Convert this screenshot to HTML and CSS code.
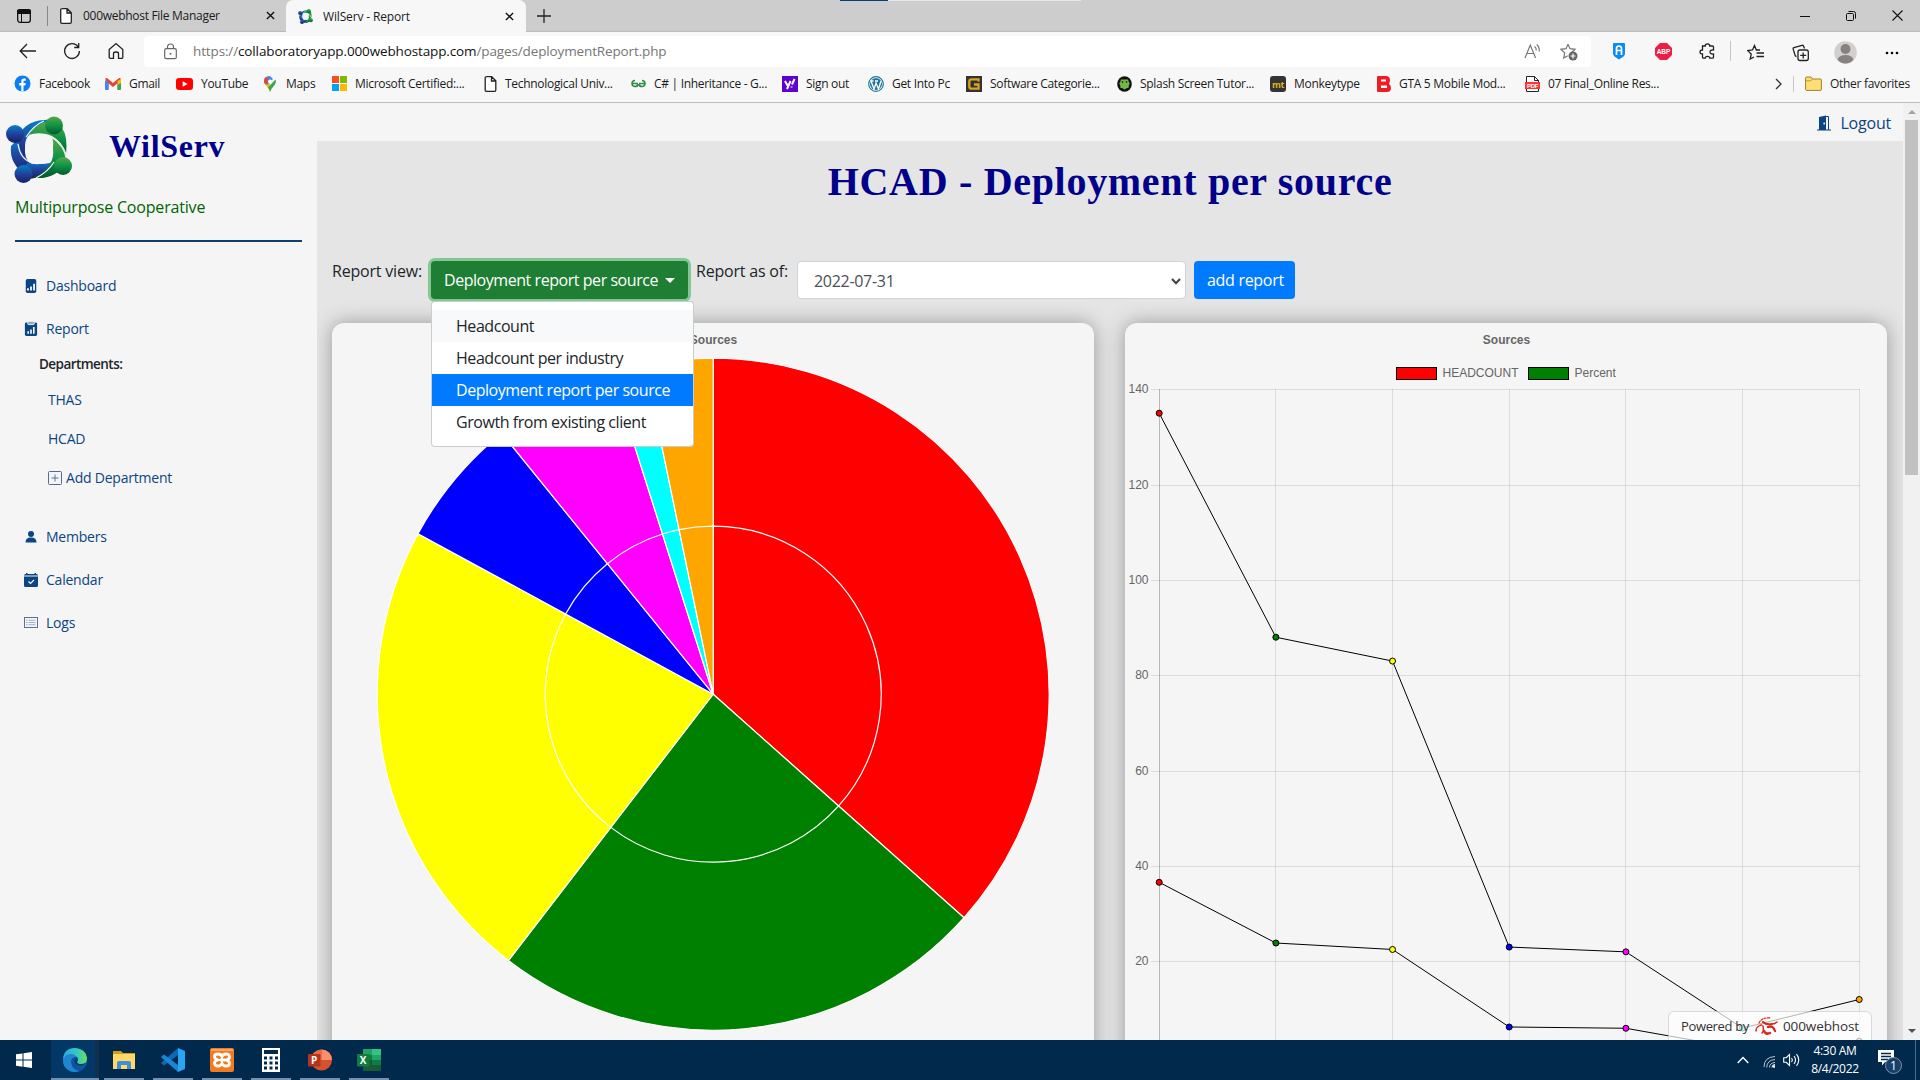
FILE: index.html
```html
<!DOCTYPE html>
<html lang="en">
<head>
<meta charset="utf-8">
<title>WilServ - Report</title>
<link rel="stylesheet" href="styles.css">
</head>
<body>
<svg width="0" height="0" class="defs">
  <defs>
    <linearGradient id="gBlue" x1="0" y1="0" x2="0" y2="1"><stop offset="0" stop-color="#0680cc"/><stop offset=".5" stop-color="#20419a"/><stop offset="1" stop-color="#1a1f66"/></linearGradient>
    <linearGradient id="gGreen" x1="0" y1="0" x2="0" y2="1"><stop offset="0" stop-color="#57a844"/><stop offset=".5" stop-color="#0e9347"/><stop offset="1" stop-color="#04592a"/></linearGradient>
    <linearGradient id="gEdge" x1="0" y1="0" x2="1" y2="0"><stop offset="0" stop-color="#29a9e1"/><stop offset=".6" stop-color="#35c9c0"/><stop offset="1" stop-color="#6be35a"/></linearGradient>
    <symbol id="page" viewBox="0 0 12 16"><path d="M1.7.7h5.5l4.1 4.1v9.3q0 1.2-1.2 1.2H1.9Q.7 15.300.7 14.100V1.900Q.7.700 1.900.700zM7 .8V5h4.200" fill="#fff" stroke="#222" stroke-width="1.300"/></symbol>
    <symbol id="x" viewBox="0 0 10 10"><path d="M1 1l8 8M9 1L1 9" stroke="#111" stroke-width="1.500"/></symbol>
    <symbol id="logo" viewBox="0 0 66 67">
      <path d="M9 26Q17 5 38 4Q47 3 49 7Q28 9 23 19Q15 34 24 48Q5 42 9 26z" fill="url(#gBlue)"/>
      <path d="M5 30Q3 48 20 59L26 48Q14 40 12 23z" fill="url(#gBlue)"/>
      <path d="M21 47Q34 50 50 45Q40 62 22 63L17 55z" fill="url(#gBlue)"/>
      <path d="M22 19Q33 4 47 6L56 12Q62 20 60 39Q52 20 40 18Q31 16 22 19z" fill="url(#gGreen)"/>
      <path d="M46 22Q58 30 60 44Q55 59 37 62L27 62Q43 55 45 45Q47 36 46 22z" fill="url(#gGreen)"/>
      <path d="M22 20Q31 18 44 20Q48 21 47 31Q48 43 44 47Q32 49 24 47Q18 42 19 31Q19 24 22 20z" fill="#f5f5f5"/>
      <path d="M20 21Q28 9 38 5M12 28Q14 43 26 47M30 62Q42 56 48 46M46 21Q55 25 60 38" fill="none" stroke="#f5f5f5" stroke-width="1.200"/>
      <circle cx="9" cy="18" r="9" fill="url(#gBlue)"/><circle cx="17.500" cy="58" r="9" fill="url(#gBlue)"/>
      <circle cx="48" cy="9.500" r="9" fill="url(#gGreen)"/><circle cx="57" cy="50" r="9" fill="url(#gGreen)"/>
    </symbol>
  </defs>
</svg>

<header class="browser">
  <div class="tabstrip">
    <span class="progress"></span>
    <div class="tab-actions"><svg width="16" height="16" viewBox="0 0 16 16"><rect x="1.700" y="1.700" width="12.600" height="12.600" rx="2.200" fill="none" stroke="#111" stroke-width="1.300"/><path d="M1.500 2h13v3.500H1.500zM5.500 5v9" stroke="#111" fill="#111"/></svg></div>
    <div class="tab tab-idle">
      <svg width="12" height="16"><use href="#page"/></svg>
      <span class="tab-title t-files">000webhost File Manager</span>
      <svg width="9" height="9"><use href="#x"/></svg>
    </div>
    <div class="tab tab-active">
      <svg width="15" height="15"><use href="#logo"/></svg>
      <span class="tab-title t-report">WilServ - Report</span>
      <svg width="9" height="9"><use href="#x"/></svg>
    </div>
    <svg class="newtab" width="14" height="14" viewBox="0 0 14 14"><path d="M7 0v14M0 7h14" stroke="#222" stroke-width="1.300"/></svg>
    <div class="window-controls">
      <svg width="10" height="10"><path d="M0 5.500h10" stroke="#111"/></svg>
      <svg width="10" height="10" viewBox="0 0 10 10"><rect x=".5" y="2.500" width="7" height="7" rx="1" fill="none" stroke="#111"/><path d="M2.500 1q0-.5.500-.5h4.500q2 0 2 2V7q0 .5-.5.500" fill="none" stroke="#111"/></svg>
      <svg width="11" height="11" viewBox="0 0 11 11"><path d="M.5.500l10 10M10.500.500l-10 10" stroke="#111" stroke-width="1.100"/></svg>
    </div>
  </div>

  <div class="toolbar">
    <div class="nav-buttons">
      <svg width="18" height="16" viewBox="0 0 18 16"><path d="M17 8H1.500M8 1L1.200 8L8 15" fill="none" stroke="#222" stroke-width="1.300"/></svg>
      <svg width="18" height="18" viewBox="0 0 18 18"><path d="M15.200 5A7.400 7.400 0 1 0 16.400 9M15.700 1v4.500h-4.500" fill="none" stroke="#222" stroke-width="1.300"/></svg>
      <svg width="16" height="18" viewBox="0 0 16 18"><path d="M1.200 7.500L8 1.500l6.800 6v7.700q0 1.200-1.200 1.200H10.500V11.500Q10.500 10 8 10t-2.500 1.500v4.900H2.400q-1.200 0-1.200-1.200z" fill="none" stroke="#222" stroke-width="1.300"/></svg>
    </div>
    <div class="address">
      <svg width="13" height="17" viewBox="0 0 13 17"><rect x=".7" y="5.700" width="11.600" height="10" rx="1.500" fill="none" stroke="#666" stroke-width="1.200"/><path d="M3.500 5.500V4a3 3 0 0 1 6 0v1.500" fill="none" stroke="#666" stroke-width="1.200"/><circle cx="6.500" cy="10.700" r="1" fill="#666"/></svg>
      <span class="url">https://<b>collaboratoryapp.000webhostapp.com</b>/pages/deploymentReport.php</span>
      <svg width="17" height="17" viewBox="0 0 17 17"><path d="M1 15L6.300 2 11.600 15M3 10.500h6.700M10.500 3.500q2 1.500 1.800 4M12.700 1.500q3 2.500 2.500 7" fill="none" stroke="#777" stroke-width="1.200"/></svg>
      <svg width="18" height="18" viewBox="0 0 18 18"><path d="M8 1.200l2 4.500 5 .6-3.500 3.200M8 1.200L6 5.700l-5 .6L4.700 10l-1 5 4-2.300" fill="none" stroke="#777" stroke-width="1.200"/><circle cx="13" cy="13" r="4.500" fill="#666"/><path d="M13 10.500v5M10.500 13h5" stroke="#fff" stroke-width="1.200"/></svg>
    </div>
    <div class="ext">
      <svg width="14" height="18" viewBox="0 0 14 18"><path d="M2 1h10q1 0 1 1v10q0 2-6 5.500Q1 14 1 12V2q0-1 1-1z" fill="#0a8cf5"/><path d="M4.500 13V6.500Q4.500 4 7 4t2.500 2.500V13M4.500 8.500h5" fill="none" stroke="#fff" stroke-width="1.700"/></svg>
      <svg width="17" height="17" viewBox="0 0 17 17"><path d="M5 0h7l5 5v7l-5 5H5l-5-5V5z" fill="#ec1e45"/><text x="8.500" y="11.300" class="abp">ABP</text></svg>
      <svg width="17" height="17" viewBox="0 0 17 17"><path d="M3.500 3h2.700q0-2.200 2.300-2.200T10.800 3h2.700q1 0 1 1v3q-3.500-.3-3.500 2t3.500 2v3q0 1.200-1 1.200h-2.700Q10.800 13.300 8.500 13.300t-2.300 1.900H4.500q-1 0-1-1.200V11Q1 11 1 9t2.500-2z" fill="none" stroke="#222" stroke-width="1.300"/></svg>
    </div>
    <div class="ext ext-right">
      <svg width="18" height="17" viewBox="0 0 18 17"><path d="M13 6H9.300L7.500 1.500 5.500 6l-4.800.6L4.200 10l-1 5 3.800-2M9.500 9H17M9.500 12.500H17" fill="none" stroke="#222" stroke-width="1.300"/></svg>
      <svg width="17" height="18" viewBox="0 0 17 18"><rect x="6" y="6" width="10.300" height="10.500" rx="2" fill="none" stroke="#222" stroke-width="1.300"/><path d="M11.200 8.500v6M8.200 11.400h6M12.500 4.500L11.500 2q-.4-1-1.500-.7L2 3.500q-1.200.4-.8 1.600L3 11q.5 1.500 1.500 1.500" fill="none" stroke="#222" stroke-width="1.300"/></svg>
      <svg width="23" height="23" viewBox="0 0 23 23"><circle cx="11.500" cy="11.500" r="11.300" fill="#d2d0ce"/><circle cx="11.500" cy="8" r="5" fill="#85827f"/><path d="M3.500 18.500Q5 14 11.500 14t8 4.500q-3 4-8 4t-8-4z" fill="#85827f"/></svg>
      <svg width="14" height="4"><circle cx="2" cy="2" r="1.300"/><circle cx="7" cy="2" r="1.300"/><circle cx="12" cy="2" r="1.300"/></svg>
    </div>
  </div>

  <nav class="bookmarks">
    <a><svg width="17" height="17" viewBox="0 0 17 17"><circle cx="8.500" cy="8.500" r="8" fill="#0d7ef0"/><path d="M7.300 16.500V10.500H5.200V8h2.100V6.300Q7.300 3.500 10 3.500h1.700v2.200h-1.200q-1 0-1 1V8h2.200l-.4 2.500H9.500v6z" fill="#fff"/></svg>Facebook</a>
    <a><svg width="16" height="12" viewBox="0 0 16 12"><path d="M2 11.500V2l6 5 6-5v9.500" fill="none" stroke="#ea4335" stroke-width="3"/><path d="M0 3h3.500v9H1q-1 0-1-1z" fill="#4285f4"/><path d="M12.500 3H16v8q0 1-1 1h-2.500z" fill="#34a853"/><path d="M12.500 3L16 1v4l-3.500 2z" fill="#fbbc04"/></svg>Gmail</a>
    <a><svg width="17" height="12" viewBox="0 0 17 12"><rect width="17" height="12" rx="3" fill="#f00"/><path d="M6.700 3.300l5 2.700-5 2.700z" fill="#fff"/></svg>YouTube</a>
    <a class="maps"><svg width="12" height="16" viewBox="0 0 12 16"><path d="M6 16Q5 12.500 2 9.500 0 7.500 0 5.500 0 2.500 2 1l4 5z" fill="#fbbc04"/><path d="M2 1Q3.500 0 6 0l3 3-6 6Q0 7.500 0 5.500T2 1z" fill="#4285f4"/><path d="M0 5Q0 2 2 1l3 3-3 4Q0 7 0 5z" fill="#ea4335"/><path d="M11.500 3.500Q13 7 9 11q-2 2-3 5-.5-2.500-2-4.500z" fill="#34a853"/><circle cx="6" cy="5.500" r="2" fill="#fff"/></svg>Maps</a>
    <a><svg width="15" height="15"><path d="M0 0h7v7H0z" fill="#f4511e"/><path d="M8 0h7v7H8z" fill="#7fba00"/><path d="M0 8h7v7H0z" fill="#00a4ef"/><path d="M8 8h7v7H8z" fill="#ffb900"/></svg>Microsoft Certified:...</a>
    <a><svg width="13" height="16"><use href="#page"/></svg>Technological Univ...</a>
    <a><svg width="15" height="9" viewBox="0 0 15 9"><path d="M7 4.500H1M7 5A3 3 0 1 1 4 1.500M8 4.500h6M8 5A3 3 0 1 0 11 1.500" fill="none" stroke="#2f8d46" stroke-width="1.700"/></svg>C# | Inheritance - G...</a>
    <a><svg width="16" height="16" viewBox="0 0 16 16"><path d="M0 0h16v16H0z" fill="#5f01d1"/><path d="M3 5l2.500 4.500M8.500 5L5 13M12.500 3L10 8.500M9.500 10.500v1" stroke="#fff" stroke-width="2"/></svg>Sign out</a>
    <a><svg width="16" height="16" viewBox="0 0 16 16"><circle cx="8" cy="8" r="7.300" fill="#fff" stroke="#21759b" stroke-width="1.200"/><circle cx="8" cy="8" r="6" fill="#21759b"/><path d="M3 5l3 8 2-6 2.500 6L13 5M2.500 5h3M7 5h3" fill="none" stroke="#fff" stroke-width="1.300"/></svg>Get Into Pc</a>
    <a><svg width="16" height="16" viewBox="0 0 16 16"><path d="M0 0h16v16H0z" fill="#333"/><path d="M12.500 5.500V3.300H5.500Q3.300 3.300 3.300 5.500v5q0 2.200 2.200 2.200h7V8.500H8" fill="none" stroke="#d9a520" stroke-width="2.300"/></svg>Software Categorie...</a>
    <a><svg width="15" height="16" viewBox="0 0 15 16"><ellipse cx="7.500" cy="8" rx="7.300" ry="7.800" fill="#111"/><path d="M4 3.500h7l1 3 1 1-1 1-.5 3.500H10l-2.500 1.500L5 12H3.500L3 8.500l-1-1 1-1z" fill="#72b844"/><circle cx="5.500" cy="6" r=".8"/><circle cx="9.500" cy="6" r=".8"/></svg>Splash Screen Tutor...</a>
    <a><svg width="16" height="16" viewBox="0 0 16 16"><rect width="16" height="16" rx="3" fill="#323437"/><text x="8" y="11.500" class="mt">mt</text></svg>Monkeytype</a>
    <a><svg width="14" height="16" viewBox="0 0 14 16"><path d="M1 0h9q3 1 3 4 0 2-1 4 2 1 2 4 0 4-4 4H1q-1 0-1-1V1q0-1 1-1z" fill="#f01c24"/><path d="M4 3.500h5v2H4zM4 9.500h6v2.500H4z" fill="#fff"/></svg>GTA 5 Mobile Mod...</a>
    <a><svg width="15" height="16" viewBox="0 0 15 16"><path d="M1.500.500h8l4 4v11h-12z" fill="#fff" stroke="#222"/><path d="M9.500.500v4h4" fill="none" stroke="#222"/><path d="M0 6h15v7H0z" fill="#f33"/><text x="7.500" y="11.700" class="pdf">PDF</text></svg>07 Final_Online Res...</a>
    <span class="more"><svg width="7" height="12" viewBox="0 0 7 12"><path d="M1 1l5 5-5 5" fill="none" stroke="#333" stroke-width="1.300"/></svg></span>
    <a class="other"><svg width="17" height="15" viewBox="0 0 17 15"><path d="M.6 2Q.6 1 1.600 1H6l1.500 2h7.900q1 0 1 1v9.200q0 1.200-1 1.200H1.700q-1.100 0-1.100-1.200z" fill="#ffdd78" stroke="#a5811f"/><path d="M.8 4.800h5L7.500 3" fill="none" stroke="#c89a27"/></svg>Other favorites</a>
  </nav>
</header>

<div class="page">
  <aside class="sidebar">
    <div class="brand"><svg width="66" height="67"><use href="#logo"/></svg><h2>WilServ</h2></div>
    <p class="tagline">Multipurpose Cooperative</p>
    <hr>
    <a class="item"><svg width="16" height="14" viewBox="0 0 16 16"><rect x="2" width="12" height="16" rx="2" fill="#0b4582"/><path d="M4.500 13v-2.500M8 13V8.500M11.500 13V5.500" stroke="#fff" stroke-width="2"/></svg>Dashboard</a>
    <a class="item"><svg width="16" height="15" viewBox="0 0 16 16"><rect x="1.500" y="1.500" width="13" height="14.500" rx="1.500" fill="#0b4582"/><rect x="4.500" y=".3" width="7" height="3.500" rx="1" fill="#8fa9c4" stroke="#f5f5f5"/><path d="M5 13.500V11M8 13.500V9M11 13.500V6.500" stroke="#fff" stroke-width="1.700"/></svg>Report</a>
    <div class="departments">
      <p>Departments:</p>
      <a>THAS</a>
      <a>HCAD</a>
      <a><svg width="14" height="14" viewBox="0 0 14 14"><rect x=".5" y=".5" width="13" height="13" rx="1" fill="none" stroke="#52699a"/><path d="M7 3.500v7M3.500 7h7" stroke="#52799a"/></svg>Add Department</a>
    </div>
    <a class="item"><svg width="16" height="12" viewBox="0 0 16 12"><circle cx="8" cy="3" r="3" fill="#0b4582"/><path d="M2.500 11.500Q2.500 6.500 8 6.500t5.500 5z" fill="#0b4582"/></svg>Members</a>
    <a class="item"><svg width="16" height="14" viewBox="0 0 16 14"><path d="M1 3.500h14V12.500q0 1.500-1.500 1.500h-11Q1 14 1 12.500zM1 2.500Q1 1 2.500 1H3V0h1.500v1h7V0H13v1h.5Q15 1 15 2.500z" fill="#0b4582"/><path d="M5.500 8.500l2 2 3.500-3.500" fill="none" stroke="#fff" stroke-width="1.200"/></svg>Calendar</a>
    <a class="item"><svg width="16" height="11" viewBox="0 0 16 11"><rect x="1.500" y=".5" width="13" height="10" fill="none" stroke="#5b6f9e"/><path d="M3 3.200h1.500M3 5.500h1.500M3 7.800h1.500M5.500 3.200h7M5.500 5.500h7M5.500 7.800h7" stroke="#9fb0c2" stroke-width="1.100"/></svg>Logs</a>
  </aside>

  <div class="body">
    <div class="topline"><svg width="14" height="16" viewBox="0 0 14 16"><path d="M2 15V2l7-1.500V15zM0 14.500h14v1H0z" fill="#0b4582"/><path d="M9 1.500h2.500V15" fill="none" stroke="#0b4582"/><circle cx="7.200" cy="8.500" r=".9" fill="#fff"/></svg><a>Logout</a></div>
    <main class="report">
      <h1>HCAD - Deployment per source</h1>
      <div class="filters">
        <label class="l-view">Report view:</label>
        <div class="dropdown">
          <button class="btn btn-success">Deployment report per source<i class="caret"></i></button>
          <ul class="menu">
            <li class="hover">Headcount</li>
            <li>Headcount per industry</li>
            <li class="active">Deployment report per source</li>
            <li>Growth from existing client</li>
          </ul>
        </div>
        <label class="l-asof">Report as of:</label>
        <div class="select">2022-07-31<svg width="10" height="7" viewBox="0 0 10 7"><path d="M1 1l4 4.200L9 1" fill="none" stroke="#444" stroke-width="2.200"/></svg></div>
        <button class="btn btn-primary">add report</button>
      </div>
      <div class="cards">
        <section class="card"><svg id="pie" width="762" height="760"><text x="381.500" y="20.500" class="chart-title">Sources</text></svg></section>
        <section class="card"><svg id="line" width="762" height="760"><text x="381.500" y="20.500" class="chart-title">Sources</text>
          <g stroke="#000"><rect x="271.500" y="44.500" width="40" height="12" fill="red"/><rect x="403.500" y="44.500" width="40" height="12" fill="green"/></g>
          <g class="tick"><text x="317.500" y="53.600">HEADCOUNT</text><text x="449.500" y="53.600">Percent</text></g>
        </svg></section>
      </div>
      <div class="powered"><span>Powered by</span>
        <svg width="24" height="20" viewBox="0 0 24 20"><g fill="none" stroke="#d8271c" stroke-linecap="round"><path d="M8 6q3 3 9 2" stroke-width="2.200"/><path d="M17 8q3 0 5-2" stroke-width="1.500"/><path d="M8 10q1 6-1 7" stroke-width="1.500"/><path d="M9 15q2 4 6 2" stroke-width="2.500"/><path d="M13 11q5-2 7 4" stroke-width="2.300"/><path d="M4 7Q7 1 15 2" stroke-width="1.200" stroke-dasharray="2 1.500"/><path d="M1 15q0-5 6-6" stroke-width="1.500" stroke-dasharray="2 1.500"/></g></svg>
        <b>000webhost</b></div>
    </main>
  </div>
  <div class="scrollbar"><i class="up"></i><i class="thumb"></i><i class="down"></i></div>
</div>

<footer class="taskbar">
  <div class="start"><svg width="16" height="16" viewBox="0 0 16 16"><path d="M0 2.300L6.500 1.400V7.500H0zM7.500 1.200L16 0v7.500H7.500zM0 8.500h6.500v6.200L0 13.800zM7.500 8.500H16V16l-8.500-1.200z" fill="#fff"/></svg></div>
  <div class="app current"><svg width="24" height="24" viewBox="0 0 24 24"><circle cx="12" cy="12" r="12" fill="#1470bd"/><path d="M0 11Q1 0 12 0q11 1 12 10 0 6-6 6-4 0-4-2 2-2 0-5Q8 3 0 11z" fill="url(#gEdge)"/><path d="M8 13q0-4 4-5 4 2 2 6-1 3 4 3.500 3 0 5-2Q20 24 12 24q-7-1-8-8z" fill="#0f549e"/><path d="M0 12Q2 6 8 6q4 0 5 3-5 0-5 5 1 8 8 9-4 2-9 0-7-3-7-11z" fill="#1f86d0"/><path d="M14.500 9.500Q15 12 14 14q0 2 4 2 3 0 5-1-3 3.500-7 2.500Q11 16 11.500 12q.5-2 3-2.500z" fill="#033866"/></svg></div>
  <div class="app"><svg width="22" height="18" viewBox="0 0 22 18"><path d="M0 0h8l2 2h12v5H0z" fill="#d99a1c"/><path d="M0 3h22v15H0z" fill="#ffd869"/><path d="M4 18v-6q0-2 2-2h10q2 0 2 2v6h-4v-4H8v4z" fill="#3f8fd6"/></svg></div>
  <div class="app"><svg width="24" height="24" viewBox="0 0 24 24"><path d="M17 0l7 3v18l-7 3z" fill="#2aa5f3"/><path d="M17 0v7L3 17.500 0 15z" fill="#0a6bb5"/><path d="M17 24v-7L3 6.500 0 9z" fill="#1789d4"/></svg></div>
  <div class="app"><svg width="24" height="24" viewBox="0 0 24 24"><rect width="24" height="24" rx="2" fill="#f47a20"/><path d="M1 1h22v2H1z" fill="#faa56b"/><path d="M8 12Q4.500 11 4.500 8.500T8 6q3 0 4 2.500Q13 6 16 6t3.500 2.500T16 12q3.500 1 3.500 3.500T16 18q-3 0-4-2.500Q11 18 8 18t-3.500-2.500T8 12zM10 12h5" fill="none" stroke="#fff" stroke-width="2.800"/></svg></div>
  <div class="app"><svg width="18" height="24" viewBox="0 0 18 24"><path d="M0 0h18v24H0z" fill="#fff"/><path d="M2 2h14v4H2z" fill="#00294b"/><path d="M2 10h14M2 15h14M2 20h14" stroke="#00294b" stroke-width="3" stroke-dasharray="3 2.500"/></svg></div>
  <div class="app"><svg width="24" height="22" viewBox="0 0 24 22"><circle cx="13.500" cy="11" r="10.500" fill="#d35230"/><path d="M13.500.500A10.500 10.500 0 0 1 24 11H13.500z" fill="#ff8f6b"/><path d="M3 11h10.500V.500Q4 1.500 3 11z" fill="#ed6c47"/><rect y="5" width="12.500" height="12.500" rx="1" fill="#b7321a"/><text x="6.200" y="15" class="office">P</text></svg></div>
  <div class="app"><svg width="24" height="22" viewBox="0 0 24 22"><path d="M6 0h9v6H6z" fill="#21a366"/><path d="M15 0h9v6h-9z" fill="#33c481"/><path d="M6 6h9v5H6z" fill="#107c41"/><path d="M15 6h9v5h-9z" fill="#21a366"/><path d="M6 11h9v11H6z" fill="#185c37"/><path d="M15 11h9v5h-9z" fill="#107c41"/><path d="M15 16h9v6h-9z" fill="#185c37"/><rect y="5" width="12.500" height="12.500" rx="1" fill="#107c41"/><text x="6.200" y="15" class="office">X</text></svg></div>
  <div class="tray">
    <svg width="12" height="8" viewBox="0 0 12 8"><path d="M.7 7L6 1.500 11.300 7" fill="none" stroke="#fff" stroke-width="1.400"/></svg>
    <svg width="12" height="13" viewBox="0 0 12 13"><g fill="none" stroke="#b8c5d1"><path d="M1 12Q1 2 12 1.500"/><path d="M3.700 12.500Q4 5 12 4.500"/><path d="M6.500 12.500q0-4.500 5.500-5"/></g><path d="M9 12.500q0-3 3-3" fill="none" stroke="#fff"/><circle cx="11" cy="11.500" r="1.300" fill="#fff"/></svg>
    <svg width="17" height="14" viewBox="0 0 17 14"><path d="M.7 4.700h2.500L6.500 1.500v11L3.200 9.300H.7z" fill="none" stroke="#fff" stroke-width="1.100"/><path d="M8.500 5q1.500 2 0 4M11 3q3 4 0 8M13.500 1.200q4.500 5.800 0 11.600" fill="none" stroke="#fff" stroke-width="1.100"/></svg>
    <div class="clock"><span>4:30 AM</span><span>8/4/2022</span></div>
    <svg class="notice" width="25" height="26" viewBox="0 0 25 26"><path d="M0 1h16v12H7l-3 3.500V13H0z" fill="#fff"/><path d="M3 4.500h10M3 7.500h10M3 10.500h7" stroke="#00294b" stroke-width="1.300"/><circle cx="15.500" cy="16.500" r="8" fill="#17406b" stroke="#7d92a8"/><text x="15.500" y="21" class="badge">1</text></svg>
  </div>
</footer>
<script src="charts.js"></script>
</body>
</html>
```
FILE: styles.css
```css
* { box-sizing: border-box; }
body { margin: 0; width: 1920px; height: 1080px; overflow: hidden; display: flex; flex-direction: column; background: #f5f5f5; color: #212529; font-family: "Open Sans", "Noto Sans", sans-serif; }
svg { display: block; flex: none; }
.defs { position: absolute; }

/* browser window */
.browser { height: 103px; background: #f7f7f7; border-bottom: 1px solid #bdbdbd; font-size: 12px; color: #1b1b1b; }
.tabstrip { position: relative; height: 32px; background: #cdcdcd; display: flex; align-items: center; border-bottom: 1px solid #bcbcbc; }
.progress { position: absolute; top: 0; left: 840px; width: 241px; height: 1px; background: linear-gradient(90deg, #00417f 48px, #e6e6e6 48px); }
.tab-actions { width: 48px; height: 20px; padding: 2px 0 0 16px; border-right: 1px solid #888; }
.tab { height: 32px; display: flex; align-items: center; white-space: nowrap; }
.tab-idle { width: 238px; padding: 0 11px 0 12px; gap: 11px; }
.tab-active { width: 240px; padding: 0 12px; gap: 10px; background: #f7f7f7; border-radius: 7px 7px 0 0; margin-bottom: -1px; }
.tab-title { flex: 1; }
.t-files { letter-spacing: -.29px; }
.t-report { letter-spacing: -.15px; }
.newtab { margin-left: 11px; }
.window-controls { margin-left: auto; width: 138px; display: grid; grid-template-columns: repeat(3, 46px); justify-items: center; align-items: center; }
.toolbar { height: 38px; display: flex; align-items: center; }
.nav-buttons { width: 144px; padding-left: 6px; display: grid; grid-template-columns: repeat(3, 44px); justify-items: center; align-items: center; }
.address { width: 1447px; height: 31px; margin-top: 1px; border-radius: 4px; background: #fff; display: flex; align-items: center; padding: 0 13px 0 20px; }
.url { flex: 1; margin-left: 16px; margin-top: -2px; font-size: 13.500px; letter-spacing: -.13px; color: #767676; white-space: nowrap; }
.url b { font-weight: 400; color: #111; }
.address .url + svg { margin-right: 19px; }
.ext { width: 140px; height: 20px; padding-left: 6px; border-right: 1px solid #c6c6c6; display: grid; grid-template-columns: repeat(3, 44px); align-items: center; justify-items: center; }
.ext-right { width: 184px; padding-left: 3px; border: 0; grid-template-columns: 44px 44px 47px 45px; }
.abp { font: bold 6.500px "Liberation Sans", sans-serif; fill: #fff; text-anchor: middle; }
.bookmarks { height: 27px; padding-left: 14px; display: grid; grid-template-columns: 91px 71px 88px 68px 152px 147px 151px 86px 98px 151px 153px 107px 148px 239px 30px 1fr; align-items: center; letter-spacing: -.3px; }
.bookmarks a { display: flex; align-items: center; gap: 8px; white-space: nowrap; }
.bookmarks .maps { gap: 10px; }
.mt { font: bold 9px "Open Sans", sans-serif; fill: #e2b714; text-anchor: middle; }
.pdf { font: bold 6px "Liberation Sans", sans-serif; fill: #fff; text-anchor: middle; }
.more { height: 16px; display: flex; align-items: center; padding-left: 11px; border-right: 1px solid #c6c6c6; }
.bookmarks .other { padding-left: 11px; }

/* page */
.page { height: 937px; display: flex; }
.sidebar { width: 317px; font-size: 14px; letter-spacing: -.22px; color: #0b4582; }
.brand { display: flex; padding: 13px 0 0 6px; gap: 37px; }
.brand h2 { margin: 8px 0 0; color: #00008b; font: bold 32px/44px "Liberation Serif", serif; letter-spacing: .7px; }
.tagline { margin: 12px 0 0 15px; color: #006400; font-size: 16px; font-weight: 500; line-height: 24px; letter-spacing: -.18px; }
.sidebar hr { margin: 21px 15px 22px; border: 0; height: 2px; background: #0f3f70; }
.item { height: 43px; padding-left: 23px; display: flex; align-items: center; gap: 7px; }
.departments { height: 165px; padding-left: 48px; }
.departments p { margin: 0 0 1px -9px; line-height: 29px; font-size: 13.500px; font-weight: 600; color: #212529; letter-spacing: -.55px; }
.departments a { height: 39px; display: flex; align-items: center; gap: 4px; }
.body { width: 1586px; }
.topline { height: 38px; display: flex; align-items: center; justify-content: flex-end; gap: 9px; padding: 1px 12px 0 0; font-size: 16px; letter-spacing: -.2px; color: #0b4582; }
.report { position: relative; height: 899px; overflow: hidden; background: #e5e5e5; }
.report h1 { margin: 0; padding-top: 17px; height: 120px; text-align: center; color: #00008b; font: bold 40px/48px "Liberation Serif", serif; letter-spacing: .7px; }
.filters { display: flex; height: 38px; padding-left: 15px; font-size: 16px; letter-spacing: -.45px; white-space: nowrap; }
.filters label { font-weight: 500; line-height: 21px; letter-spacing: -.2px; }
.l-view { width: 99px; }
.dropdown { position: relative; width: 257px; }
.btn { height: 38px; border: 0; border-radius: 4px; padding: 0 13px; color: #fff; font: inherit; letter-spacing: inherit; white-space: nowrap; }
.btn-success { width: 257px; background: #1e7e34; box-shadow: 0 0 0 3px rgba(40, 167, 69, .5); display: flex; align-items: center; justify-content: space-between; }
.caret { border: 5px solid transparent; border-top-color: #fff; border-bottom: 0; margin-right: 0; }
.menu { position: absolute; z-index: 2; top: 40px; left: 0; width: 263px; height: 146px; margin: 0; padding: 8px 0; list-style: none; background: #fff; border: 1px solid rgba(0, 0, 0, .2); border-radius: 4px; }
.menu li { height: 32px; line-height: 33px; padding-left: 24px; }
.menu .hover { background: #f8f9fa; }
.menu .active { background: #007bff; color: #fff; }
.l-asof { width: 109px; padding-left: 8px; }
.select { width: 389px; height: 38px; border: 1px solid #ced4da; border-radius: 4px; background: #fff; color: #495057; display: flex; align-items: center; justify-content: space-between; padding: 2px 4px 0 16px; letter-spacing: -.3px; }
.btn-primary { background: #007bff; margin-left: 8px; width: 101px; letter-spacing: -.3px; }
.cards { display: flex; gap: 31px; padding: 24px 0 0 15px; }
.card { width: 762px; height: 1000px; border-radius: 12px; background: #f5f5f5; box-shadow: 0 0 20px #999; }
.chart-title { font: bold 12px "Liberation Sans", Arial, sans-serif; fill: #666; text-anchor: middle; }
.tick { font: 12px "Liberation Sans", Arial, sans-serif; fill: #666; }
.tick-y { text-anchor: end; }
.powered { position: absolute; right: 31px; bottom: 0; width: 204px; height: 29px; border: 1px solid rgba(0, 0, 0, .14); border-bottom: 0; border-radius: 6px 6px 0 0; background: rgba(255, 255, 255, .7); display: flex; align-items: center; padding: 0 12px; font-size: 13px; letter-spacing: -.35px; color: #333; white-space: nowrap; }
.powered svg { margin: 0 4px 0 6px; }
.powered b { font-weight: 500; font-size: 13.500px; letter-spacing: -.1px; }
.scrollbar { width: 17px; background: #f1f1f1; display: flex; flex-direction: column; align-items: center; }
.scrollbar .up { margin-top: 7px; border: 4px solid transparent; border-top: 0; border-bottom-color: #a3a3a3; }
.scrollbar .thumb { width: 13px; height: 355px; margin-top: 6px; background: #c1c1c1; }
.scrollbar .down { margin: auto 0 7px; border: 4px solid transparent; border-bottom: 0; border-top-color: #505050; }

/* taskbar */
.taskbar { height: 40px; background: #00294b; display: flex; }
.start { width: 51px; display: flex; align-items: center; padding-left: 16px; }
.app { width: 40px; margin-right: 9px; display: flex; align-items: center; justify-content: center; border-bottom: 2px solid #7591ae; padding-top: 2px; }
.current { width: 48px; margin-right: 5px; background: linear-gradient(90deg, #033866 44px, #12304d 44px); }
.office { font: bold 10px "Open Sans", sans-serif; fill: #fff; text-anchor: middle; }
.tray { margin-left: auto; width: 183px; display: flex; align-items: center; color: #fff; font-size: 12px; }
.tray svg:nth-child(2) { margin: 2px 8px 0 14px; }
.clock { width: 70px; display: flex; flex-direction: column; align-items: center; line-height: 18px; letter-spacing: -.3px; }
.notice { margin: 4px 9px 0 8px; }
.badge { font: 12px "Open Sans", sans-serif; fill: #fff; text-anchor: middle; }
.tray { border-right: 1px solid #4b6a87; margin-right: 4px; width: 179px; }
```
FILE: charts.js
```js
const NS = 'http://www.w3.org/2000/svg';
const counts = [135, 88, 83, 23, 22, 6, 12];
const total = counts.reduce((a, b) => a + b, 0);
const percents = counts.map(n => n / total * 100);
const colors = ['red', 'green', 'yellow', 'blue', 'magenta', 'cyan', 'orange'];

function add(parent, name, attrs, text) {
  const el = document.createElementNS(NS, name);
  for (const k in attrs) el.setAttribute(k, attrs[k]);
  if (text !== undefined) el.textContent = text;
  parent.appendChild(el);
}

// Two nested pies sharing one centre: headcount outside, percent inside.
const pie = document.getElementById('pie');
for (const radius of [336, 168]) {
  let start = -Math.PI / 2;
  counts.forEach((n, i) => {
    const end = start + n / total * 2 * Math.PI;
    const p = a => (381.2 + radius * Math.cos(a)) + ' ' + (371.2 + radius * Math.sin(a));
    add(pie, 'path', { d: `M381.2 371.2L${p(start)}A${radius} ${radius} 0 0 1 ${p(end)}Z`, fill: colors[i], stroke: '#fff', 'stroke-width': 1.2 });
    start = end;
  });
}

// Line chart grid, axes and the two series.
const line = document.getElementById('line');
const px = i => 34.2 + i * 116.67;
const py = v => 733.7 - v * 4.7667;
for (let v = 20; v <= 140; v += 20) {
  const y = Math.round(py(v)) + .5;
  add(line, 'path', { d: `M26 ${y}H735`, stroke: 'rgba(0,0,0,.1)' });
  add(line, 'text', { x: 23.5, y: y + 3.5, class: 'tick tick-y' }, v);
}
for (let i = 0; i < 7; i++) {
  add(line, 'path', { d: `M${Math.floor(px(i)) + .5} 66V742`, stroke: i ? 'rgba(0,0,0,.1)' : 'rgba(0,0,0,.25)' });
}
for (const series of [percents, counts]) {
  add(line, 'polyline', { points: series.map((v, i) => px(i) + ',' + py(v)).join(' '), fill: 'none', stroke: '#000' });
  series.forEach((v, i) => add(line, 'circle', { cx: px(i), cy: py(v), r: 3, fill: colors[i], stroke: '#000' }));
}
```
